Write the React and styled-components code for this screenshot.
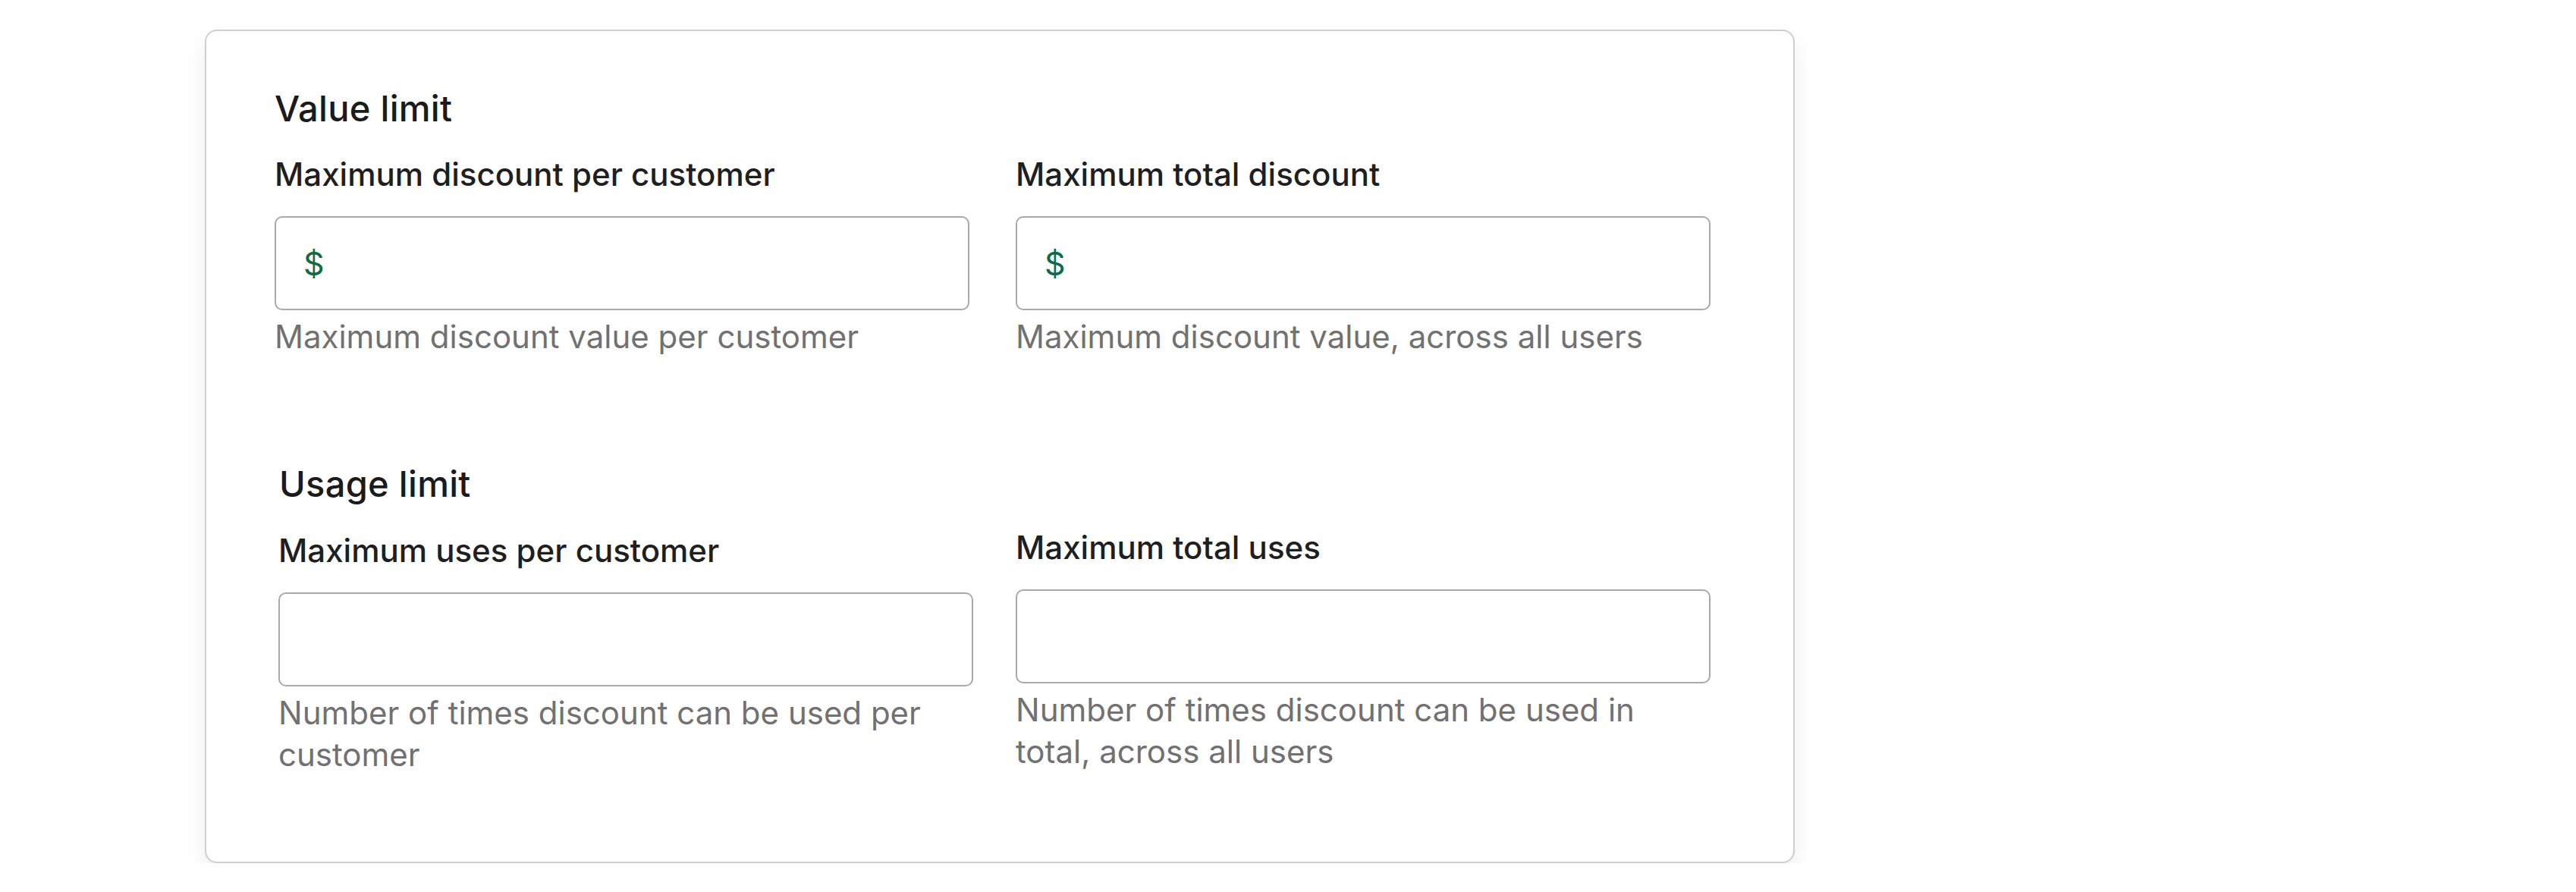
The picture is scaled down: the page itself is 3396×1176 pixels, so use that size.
import styled, { createGlobalStyle } from "styled-components";

const GlobalStyle = createGlobalStyle`
  * {
    box-sizing: border-box;
  }
  html,
  body {
    margin: 0;
    padding: 0;
    background: #ffffff;
    font-family: Inter, "Noto Sans", "Liberation Sans", sans-serif;
  }
`;

const Page = styled.div`
  padding: 39px 0 0 270px;
`;

const Card = styled.div`
  width: 2096px;
  background: #ffffff;
  border: 2px solid #cfcfcf;
  border-radius: 16px;
  box-shadow: 0 12px 28px rgba(0, 0, 0, 0.07);
  padding: 74px 0 114px 90px;
`;

const Section = styled.section`
  & + & {
    margin-top: 139px;
  }
`;

const Heading = styled.h2`
  margin: 0 0 0 ${(p) => (p.$shift ? "6px" : "0")};
  font-size: 47px;
  line-height: 56px;
  font-weight: 500;
  letter-spacing: 0.3px;
  color: #1b1b1b;
`;

const Row = styled.div`
  display: grid;
  grid-template-columns: 916px 916px;
  column-gap: ${(p) => (p.$shift ? "56px" : "61px")};
  align-items: start;
  margin-top: ${(p) => (p.$shift ? "30px" : "33px")};
  padding-left: ${(p) => (p.$shift ? "5px" : "0")};
`;

const Field = styled.div`
  display: flex;
  flex-direction: column;
  margin-top: ${(p) => (p.$drop ? "4px" : "0")};
`;

const Label = styled.label`
  font-size: 42px;
  line-height: 52px;
  font-weight: 500;
  color: #1f1f1f;
  margin-bottom: 29px;
`;

const InputBox = styled.div`
  display: flex;
  align-items: center;
  height: 124px;
  border: 2px solid #a9a9a9;
  border-radius: 10px;
  background: #ffffff;
  padding: 0 36px;
  gap: 10px;
`;

const Prefix = styled.span`
  font-size: 43px;
  line-height: 1;
  color: #0d6b47;
`;

const Input = styled.input`
  flex: 1;
  min-width: 0;
  height: 100%;
  border: none;
  outline: none;
  background: transparent;
  font-family: inherit;
  font-size: 42px;
  color: #1f1f1f;
  padding: 0;
`;

const Help = styled.p`
  margin: 7px 0 0;
  font-size: 42px;
  line-height: 55px;
  font-weight: 400;
  color: #717171;
`;

const LimitField = ({ label, help, prefix, drop }) => (
  <Field $drop={drop}>
    <Label>{label}</Label>
    <InputBox>
      {prefix && <Prefix>{prefix}</Prefix>}
      <Input type="text" />
    </InputBox>
    <Help>{help}</Help>
  </Field>
);

export default function App() {
  return (
    <>
      <GlobalStyle />
      <Page>
        <Card>
          <Section>
            <Heading>Value limit</Heading>
            <Row>
              <LimitField
                label="Maximum discount per customer"
                help="Maximum discount value per customer"
                prefix="$"
              />
              <LimitField
                label="Maximum total discount"
                help="Maximum discount value, across all users"
                prefix="$"
              />
            </Row>
          </Section>
          <Section>
            <Heading $shift>Usage limit</Heading>
            <Row $shift>
              <LimitField
                label="Maximum uses per customer"
                help="Number of times discount can be used per customer"
                drop
              />
              <LimitField
                label="Maximum total uses"
                help="Number of times discount can be used in total, across all users"
              />
            </Row>
          </Section>
        </Card>
      </Page>
    </>
  );
}
